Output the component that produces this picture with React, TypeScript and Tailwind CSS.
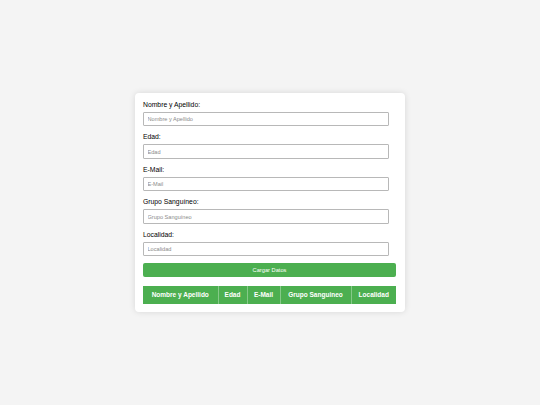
import React from 'react'

const fields = [
  { label: 'Nombre y Apellido:', placeholder: 'Nombre y Apellido' },
  { label: 'Edad:', placeholder: 'Edad' },
  { label: 'E-Mail:', placeholder: 'E-Mail' },
  { label: 'Grupo Sanguíneo:', placeholder: 'Grupo Sanguíneo' },
  { label: 'Localidad:', placeholder: 'Localidad' },
]

const columns = [
  { name: 'Nombre y Apellido', width: 'w-[75px]' },
  { name: 'Edad', width: 'w-[29px]' },
  { name: 'E-Mail', width: 'w-[33px]' },
  { name: 'Grupo Sanguineo', width: 'w-[71px]' },
  { name: 'Localidad', width: 'w-[45px]' },
]

export default function App() {
  return (
    <div className="flex h-screen w-full items-center justify-center bg-[#f4f4f4] font-['Liberation_Sans',Arial,sans-serif]">
      <div className="w-[270px] rounded-[4px] bg-white p-[8px] shadow-[0_0_6px_rgba(0,0,0,0.12)]">
        <form onSubmit={(e) => e.preventDefault()}>
          {fields.map((f) => (
            <div key={f.label} className="mb-[7px]">
              <label className="mb-[3px] block text-[6.8px] leading-[8px] text-black">{f.label}</label>
              <input
                type="text"
                placeholder={f.placeholder}
                className="block h-[14.5px] w-[246px] rounded-[1px] border border-[#b8b8b8] bg-white px-[3.5px] text-[5.6px] text-[#333] outline-none placeholder:text-[#8a8a8a]"
              />
            </div>
          ))}
          <button
            type="submit"
            className="mt-[0.5px] block h-[14px] w-[253px] rounded-[2px] bg-[#4caf50] text-[5.7px] text-white"
          >
            Cargar Datos
          </button>
        </form>
        <table className="mt-[9px] w-[253px] table-fixed border-collapse">
          <thead>
            <tr className="bg-[#4caf50]">
              {columns.map((c, i) => (
                <th
                  key={c.name}
                  className={`${c.width} h-[18px] p-0 text-center text-[6.5px] font-bold text-white ${i > 0 ? 'border-l border-[#86c989]' : ''}`}
                >
                  {c.name}
                </th>
              ))}
            </tr>
          </thead>
        </table>
      </div>
    </div>
  )
}
